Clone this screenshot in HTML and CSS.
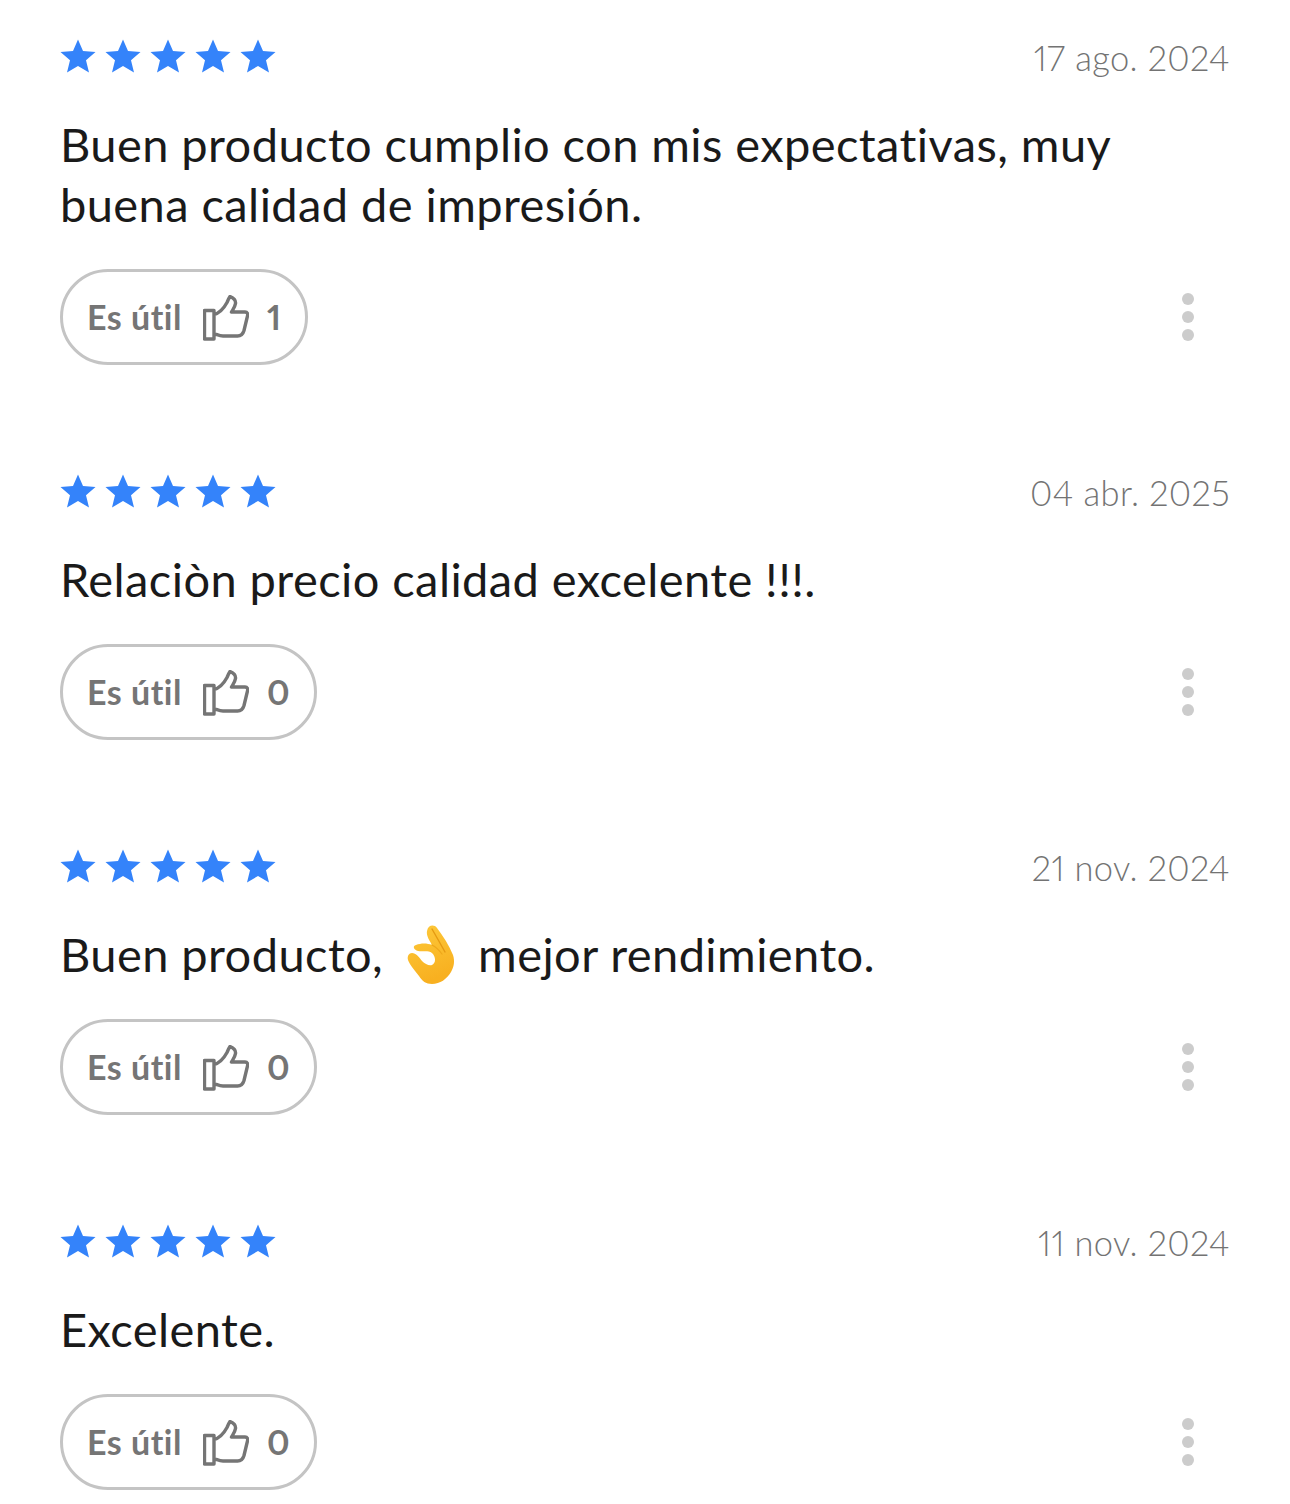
FILE: index.html
```html
<!DOCTYPE html>
<html lang="es">
<head>
<meta charset="utf-8">
<title>Opiniones</title>
<link rel="stylesheet" href="styles.css">
</head>
<body>
<svg class="defs" width="0" height="0" aria-hidden="true">
  <defs>
    <symbol id="star" viewBox="0 0 36 34"><path d="M18 0.5 L23 12 L35.5 13 L26 21.3 L29 33.5 L18 27 L7 33.5 L10 21.3 L0.5 13 L13 12 Z"/></symbol>
    <symbol id="thumb" viewBox="0 0 46 46"><path d="M1.5 15.5H11V44H1.5Z M11 19.5 C17 18 21 13 24 7.5 C25 5 26 3 27 1.5 C30.5 3 33 5 32.5 8.5 C32 12 30 14.5 28.5 17 H42 C44.5 17 45 19 44.5 21 L41 35.5 C40 39 38 41 34.5 41 H20 C17 41 14 39.5 11 38.5" fill="none" stroke="currentColor" stroke-width="3.4" stroke-linejoin="round" stroke-linecap="round"/></symbol>
    <symbol id="dots" viewBox="0 0 14 48"><circle cx="7" cy="6" r="6"/><circle cx="7" cy="24" r="6"/><circle cx="7" cy="42" r="6"/></symbol>
  </defs>
</svg>
<main class="reviews">
  <article class="review">
    <header class="review-head">
      <div class="stars"><svg class="star"><use href="#star"/></svg><svg class="star"><use href="#star"/></svg><svg class="star"><use href="#star"/></svg><svg class="star"><use href="#star"/></svg><svg class="star"><use href="#star"/></svg></div>
      <time class="date">17 ago. 2024</time>
    </header>
    <p class="text">Buen producto cumplio con mis expectativas, muy buena calidad de impresión.</p>
    <footer class="review-foot">
      <button class="useful"><span>Es útil</span><svg class="thumb"><use href="#thumb"/></svg><span class="count">1</span></button>
      <svg class="dots"><use href="#dots"/></svg>
    </footer>
  </article>
  <article class="review">
    <header class="review-head">
      <div class="stars"><svg class="star"><use href="#star"/></svg><svg class="star"><use href="#star"/></svg><svg class="star"><use href="#star"/></svg><svg class="star"><use href="#star"/></svg><svg class="star"><use href="#star"/></svg></div>
      <time class="date">04 abr. 2025</time>
    </header>
    <p class="text">Relaciòn precio calidad excelente !!!.</p>
    <footer class="review-foot">
      <button class="useful"><span>Es útil</span><svg class="thumb"><use href="#thumb"/></svg><span class="count">0</span></button>
      <svg class="dots"><use href="#dots"/></svg>
    </footer>
  </article>
  <article class="review">
    <header class="review-head">
      <div class="stars"><svg class="star"><use href="#star"/></svg><svg class="star"><use href="#star"/></svg><svg class="star"><use href="#star"/></svg><svg class="star"><use href="#star"/></svg><svg class="star"><use href="#star"/></svg></div>
      <time class="date">21 nov. 2024</time>
    </header>
    <p class="text">Buen producto, <svg class="emoji" viewBox="13 8 52 62"><defs><linearGradient id="hand" x1="0" y1="0" x2="0.3" y2="1"><stop offset="0" stop-color="#fdc93a"/><stop offset="1" stop-color="#f8b020"/></linearGradient></defs><path fill="url(#hand)" d="M36 16 C37 10 43 9 46 13 C52 21 58 30 62 40 C64 46 63 52 60 57 C56 64 49 69 41 69 C35 69 31 66 28 61 C24 56 19 50 17 45 C16 41 18 38 21 38 C25 38 28 42 31 46 C34 49 38 51 41 50 C45 48 45 42 41 38 C37 35 32 37 27 36 C23 35 21 31 25 30 C30 28 36 28 41 30 C39 26 35 21 36 16 Z"/><path fill="none" stroke="#e59a12" stroke-width="1.4" stroke-linecap="round" d="M41 14 C45 21 49 28 54 37"/><path fill="none" stroke="#eea71a" stroke-width="1.2" stroke-linecap="round" d="M41 30 C45 32 48 35 51 39"/></svg> mejor rendimiento.</p>
    <footer class="review-foot">
      <button class="useful"><span>Es útil</span><svg class="thumb"><use href="#thumb"/></svg><span class="count">0</span></button>
      <svg class="dots"><use href="#dots"/></svg>
    </footer>
  </article>
  <article class="review">
    <header class="review-head">
      <div class="stars"><svg class="star"><use href="#star"/></svg><svg class="star"><use href="#star"/></svg><svg class="star"><use href="#star"/></svg><svg class="star"><use href="#star"/></svg><svg class="star"><use href="#star"/></svg></div>
      <time class="date">11 nov. 2024</time>
    </header>
    <p class="text">Excelente.</p>
    <footer class="review-foot">
      <button class="useful"><span>Es útil</span><svg class="thumb"><use href="#thumb"/></svg><span class="count">0</span></button>
      <svg class="dots"><use href="#dots"/></svg>
    </footer>
  </article>
</main>
</body>
</html>
```
FILE: styles.css
```css
* { box-sizing: border-box; }
html, body { margin: 0; padding: 0; background: #fff; }
body { font-family: "Lato", "Liberation Sans", sans-serif; height: 1504px; overflow: hidden; font-variant-ligatures: none; font-variant-numeric: proportional-nums; }
.defs { position: absolute; }
.reviews { padding: 34px 60px 0 60px; display: flex; flex-direction: column; gap: 104px; }
.review-head { display: flex; justify-content: space-between; align-items: center; height: 44px; }
.stars { display: flex; gap: 9px; }
.star { width: 36px; height: 34px; fill: #3483fa; display: block; }
.date { font-size: 34.5px; font-weight: 300; color: #737373; line-height: 44px; padding-top: 3px; letter-spacing: .35px; }
.text { margin: 36px 0 35px; font-size: 47px; line-height: 60px; color: #1a1a1a; max-width: 1100px; letter-spacing: .42px; }
.emoji { width: 52px; height: 62px; vertical-align: 7px; margin: -20px 10px -20px 8px; }
.review-foot { display: flex; justify-content: space-between; align-items: center; padding-right: 35px; }
.useful { display: flex; align-items: center; height: 96px; padding: 0 24px 2px 24px; border: 3px solid #c4c4c4; border-radius: 48px; background: #fff; color: #757575; font: 700 34px "Lato", sans-serif; font-variant-numeric: proportional-nums; font-variant-ligatures: none; letter-spacing: .5px; }
.thumb { width: 46px; height: 46px; margin: 4px 18px 0 21px; color: #757575; }
.dots { width: 14px; height: 48px; fill: #cccccc; display: block; }
```
